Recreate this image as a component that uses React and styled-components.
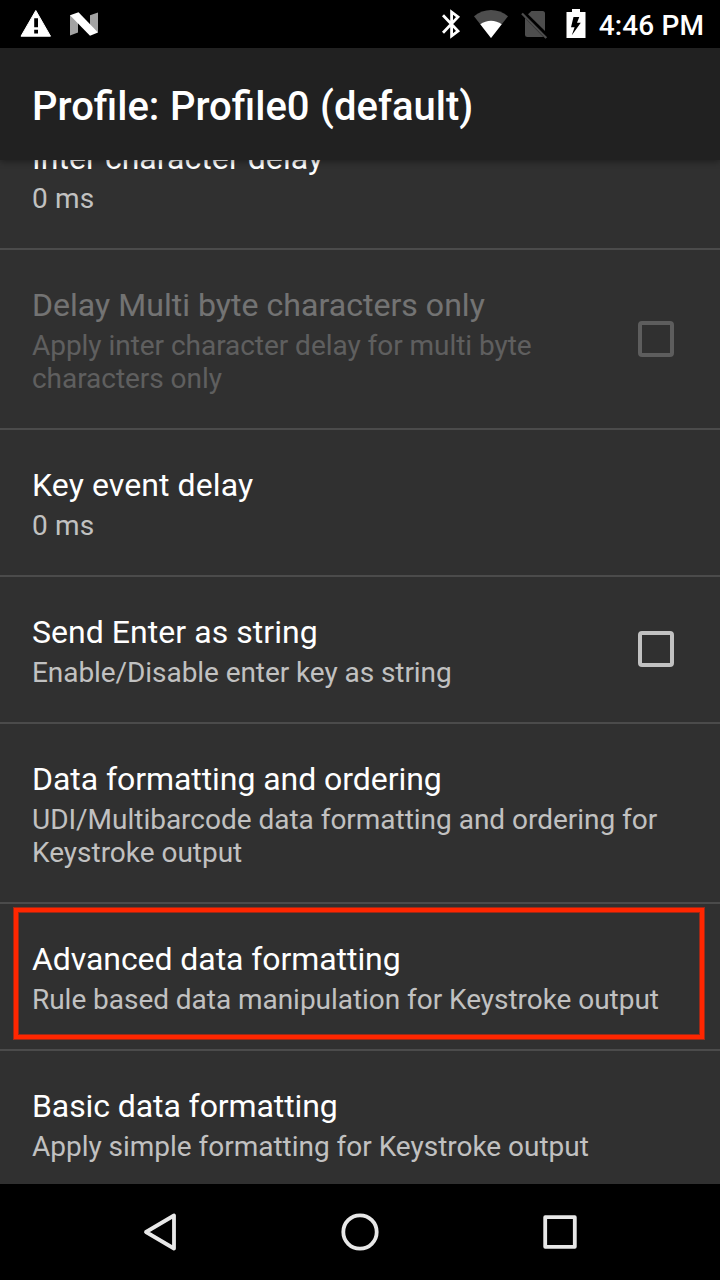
import React from "react";
import styled, { createGlobalStyle } from "styled-components";

const GlobalStyle = createGlobalStyle`
  * { box-sizing: border-box; }
  body { margin: 0; background: #000; font-family: Roboto, "Liberation Sans", sans-serif; }
`;

const Screen = styled.div`
  width: 720px;
  height: 1280px;
  display: flex;
  flex-direction: column;
  overflow: hidden;
  background: #303030;
  color: #fff;
`;

const StatusBar = styled.header`
  flex: none;
  height: 48px;
  display: flex;
  align-items: center;
  justify-content: space-between;
  padding: 0 16px 0 20px;
  background: #000;
`;

const StatusGroup = styled.div`
  display: flex;
  align-items: center;
`;

const Icon = styled.svg`
  display: block;
  flex: none;
  margin-left: ${(p) => p.$gap || 0}px;
`;

const Clock = styled.span`
  margin-left: 13px;
  font-size: 28px;
  font-weight: 500;
  line-height: 46px;
  padding-top: 3px;
  letter-spacing: 0.1px;
  white-space: nowrap;
`;

const AppBar = styled.div`
  flex: none;
  z-index: 1;
  height: 112px;
  display: flex;
  align-items: center;
  padding: 6px 32px 0;
  background: #212121;
  box-shadow: 0 2px 6px rgba(0, 0, 0, 0.35);
`;

const Title = styled.h1`
  margin: 0;
  font-size: 40px;
  font-weight: 500;
  line-height: 48px;
  word-spacing: 0.6px;
  white-space: nowrap;
`;

const Viewport = styled.main`
  flex: 1;
  min-height: 0;
  overflow: hidden;
`;

const List = styled.div`
  margin-top: -57px;
`;

const Row = styled.div`
  position: relative;
  display: flex;
  align-items: center;
  padding: 31px 46px 33px 32px;
  border-bottom: 2px solid #4b4b4b;
`;

const RowText = styled.div`
  flex: 1;
  opacity: ${(p) => (p.$disabled ? 0.32 : 1)};
`;

const RowTitle = styled.div`
  font-size: 32px;
  line-height: 48px;
  letter-spacing: ${(p) => p.$tracking || 0}px;
  white-space: nowrap;
`;

const Summary = styled.div`
  font-size: 28px;
  line-height: 33px;
  letter-spacing: ${(p) => p.$tracking || 0}px;
  color: #c1c1c1;
  white-space: pre;
`;

const Checkbox = styled.span`
  width: 36px;
  height: 36px;
  margin-top: ${(p) => (p.$disabled ? 2 : 0)}px;
  border: 4px solid ${(p) => (p.$disabled ? "#5d5d5d" : "#c1c1c1")};
  border-radius: 4px;
`;

const Highlight = styled.div`
  position: absolute;
  top: 3px;
  left: 13px;
  width: 692px;
  height: 133px;
  border: 6px solid #9b2a18;

  &::after {
    content: "";
    position: absolute;
    inset: -5px;
    border: 4px solid #ff2600;
  }
`;

const NavBar = styled.nav`
  flex: none;
  height: 96px;
  display: flex;
  justify-content: center;
  align-items: center;
  background: #000;
`;

const NavButton = styled.div`
  width: 200px;
  display: flex;
  justify-content: center;
`;

// tracking: letter spacing of the title and of the summary, in pixels
const settings = [
  { title: "Inter character delay", summary: "0 ms", tracking: [0.05, 0.2] },
  {
    title: "Delay Multi byte characters only",
    summary: "Apply inter character delay for multi byte\ncharacters only",
    tracking: [0.04, -0.04],
    checkbox: true,
    disabled: true,
  },
  { title: "Key event delay", summary: "0 ms", tracking: [0.1, 0.2] },
  {
    title: "Send Enter as string",
    summary: "Enable/Disable enter key as string",
    tracking: [0.05, -0.07],
    checkbox: true,
  },
  {
    title: "Data formatting and ordering",
    summary: "UDI/Multibarcode data formatting and ordering for\nKeystroke output",
    tracking: [-0.06, -0.02],
  },
  {
    title: "Advanced data formatting",
    summary: "Rule based data manipulation for Keystroke output",
    tracking: [-0.07, -0.04],
    highlighted: true,
  },
  {
    title: "Basic data formatting",
    summary: "Apply simple formatting for Keystroke output",
    tracking: [-0.09, -0.02],
  },
];

function Setting({ title, summary, tracking, checkbox, disabled, highlighted }) {
  return (
    <Row>
      <RowText $disabled={disabled}>
        <RowTitle $tracking={tracking[0]}>{title}</RowTitle>
        <Summary $tracking={tracking[1]}>{summary}</Summary>
      </RowText>
      {checkbox && <Checkbox $disabled={disabled} />}
      {highlighted && <Highlight />}
    </Row>
  );
}

const WarningIcon = () => (
  <Icon width="32" height="48">
    <path d="M15.8 10.5 30.5 36.2H1Z" fill="#fff" stroke="#fff" strokeWidth="1" strokeLinejoin="round" />
    <path d="M14.2 18.3h3.8v8.9h-3.8zM14.2 29.8h3.8v3.7h-3.8z" fill="#000" />
  </Icon>
);

const NougatIcon = () => (
  <Icon width="28" height="48" $gap={18}>
    <path d="M0 15 8 19V32.5L0 35.5ZM20 15.3 28 12.5V32.5L20 28Z" fill="#a3a3a3" />
    <path d="M0 15.3 8.5 12.2 28 32.5 20 35.7Z" fill="#fff" />
  </Icon>
);

const BluetoothIcon = () => (
  <Icon width="20" height="48">
    <path d="M2 15.2 17 31 10.6 36V12L17 17 2 32.8" fill="none" stroke="#fff" strokeWidth="2.8" />
  </Icon>
);

const WifiIcon = () => (
  <Icon width="36" height="48" $gap={12}>
    <path d="M1 16.2C11 8 25 8 35 16.2L18 38Z" fill="#4d4d4d" />
    <path d="M7.3 24.3C13.5 19.6 22.5 19.6 28.7 24.3L18 38Z" fill="#fff" />
  </Icon>
);

const NoSimIcon = () => (
  <Icon width="28" height="48" $gap={12}>
    <path d="M10.5 11H21.5Q24 11 24 13.5V31L7 14.3Z" fill="#4d4d4d" />
    <path d="M4 18 22.5 37H6.5Q4 37 4 34.5Z" fill="#4d4d4d" />
    <path d="M1 13.5 25.3 38" stroke="#4d4d4d" strokeWidth="2.3" />
  </Icon>
);

const BatteryIcon = () => (
  <Icon width="20" height="48" $gap={17}>
    <path d="M6 9H14V12H19.5V38H.5V12H6Z" fill="#fff" />
    <path d="M7.5 17H13.3L11 22.8H14.8L5.8 35.2 8.6 27.2H5Z" fill="#000" />
  </Icon>
);

const NavIcon = ({ children }) => (
  <Icon width="48" height="96" fill="none" stroke="#e8e8e8" strokeWidth="3.8" strokeLinejoin="round">
    {children}
  </Icon>
);

export default function App() {
  return (
    <Screen>
      <GlobalStyle />
      <StatusBar>
        <StatusGroup>
          <WarningIcon />
          <NougatIcon />
        </StatusGroup>
        <StatusGroup>
          <BluetoothIcon />
          <WifiIcon />
          <NoSimIcon />
          <BatteryIcon />
          <Clock>4:46 PM</Clock>
        </StatusGroup>
      </StatusBar>
      <AppBar>
        <Title>Profile: Profile0 (default)</Title>
      </AppBar>
      <Viewport>
        <List>
          {settings.map((item) => (
            <Setting key={item.title} {...item} />
          ))}
        </List>
      </Viewport>
      <NavBar>
        <NavButton>
          <NavIcon><path d="M10 48 38 31.5V64.5Z" /></NavIcon>
        </NavButton>
        <NavButton>
          <NavIcon><circle cx="24" cy="48" r="16.7" /></NavIcon>
        </NavButton>
        <NavButton>
          <NavIcon><rect x="9.2" y="33.2" width="29.6" height="29.6" /></NavIcon>
        </NavButton>
      </NavBar>
    </Screen>
  );
}
